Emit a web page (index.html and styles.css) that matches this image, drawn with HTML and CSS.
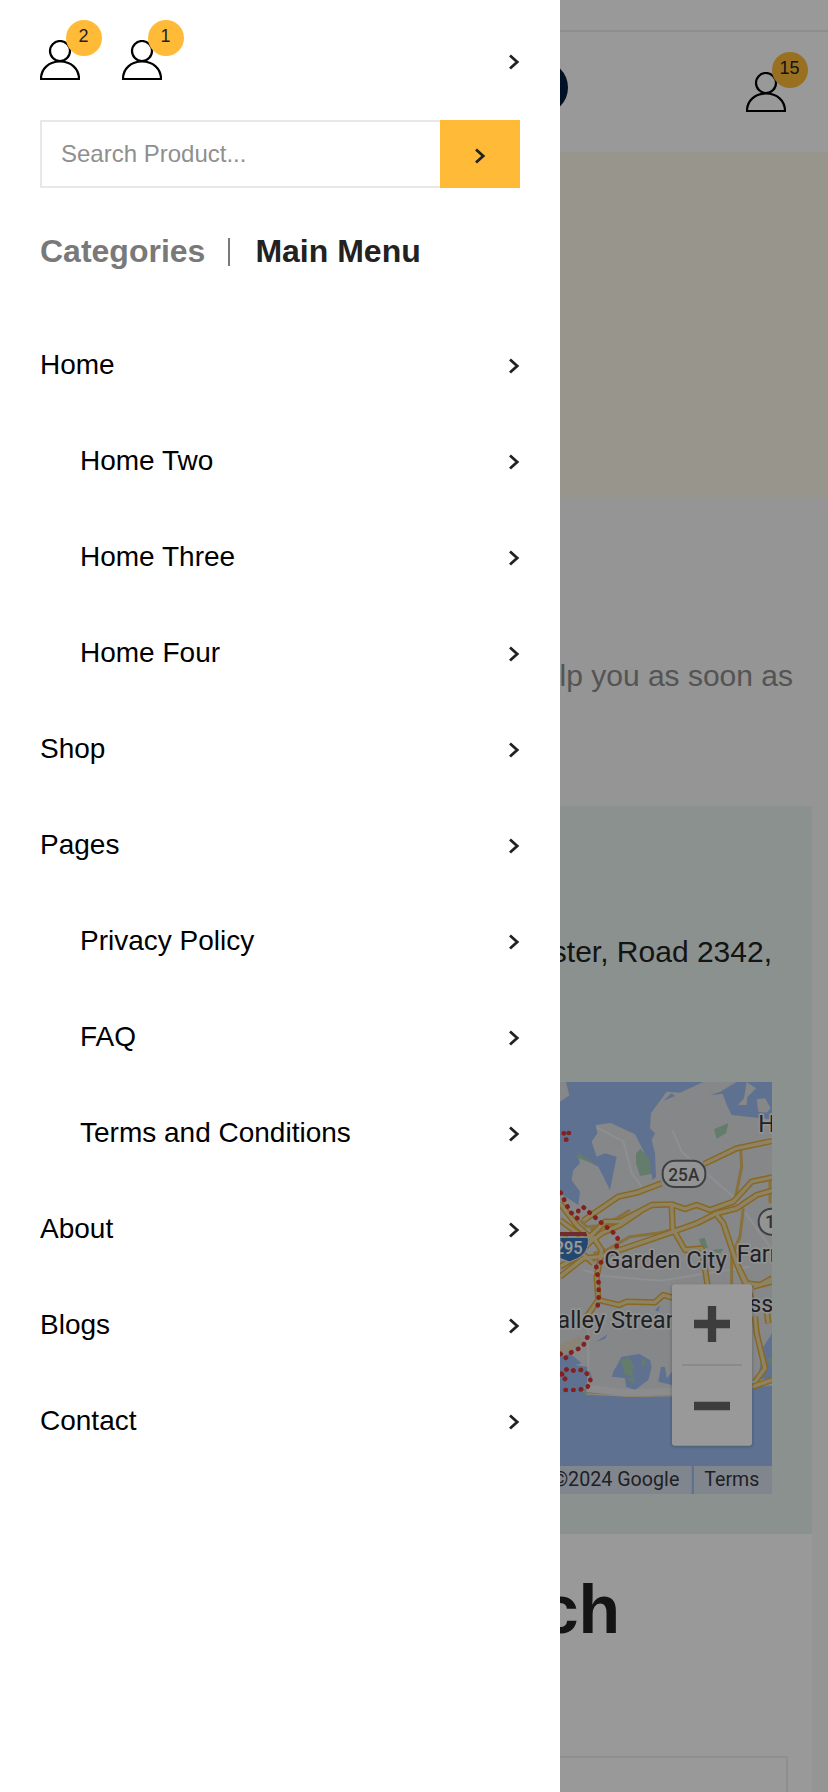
FILE: index.html
```html
<!DOCTYPE html>
<html lang="en">
<head>
<meta charset="utf-8">
<title>Contact</title>
<link rel="stylesheet" href="styles.css">
</head>
<body>
<svg class="defs" aria-hidden="true">
  <symbol id="user" viewBox="0 0 40 40"><circle cx="20" cy="11" r="10"/><path d="M1 39C1 28.500 9 21.500 20 21.500S39 28.500 39 39Z"/></symbol>
  <symbol id="chevron" viewBox="0 0 12 16"><path d="M2 1.500 9.200 8 2 14.500"/></symbol>
</svg>

<div class="page">
  <div class="topbar"></div>
  <header class="header">
    <span class="logo"></span>
    <a class="user"><svg class="user-icon"><use href="#user"/></svg><span class="badge">15</span></a>
  </header>
  <div class="banner"></div>
  <section class="intro"><p>help you as soon as</p></section>
  <main class="cards">
    <section class="address">
      <p>ster, Road 2342,</p>
      <svg class="map" viewBox="30 36 636 1236">
        <g class="terrain">
        <rect class="water" x="30" y="36" width="636" height="1236"/>
        <path class="land" d="M30 36H48L58 76 30 95ZM137 165 182 159 255 193 282 245 300 295 308 330 318 320 315 250 305 210 315 190 300 175 303 130 350 65 390 68 460 36 560 36 515 62 530 105 545 135 666 148V790L640 830 625 920 560 960H240L100 955 125 920 115 890 30 880V370L85 405 90 365 65 330 70 300 90 280 85 260 145 290 180 360 200 260 165 250 140 260 125 215 142 190Z"/>
        <path class="land" d="M590 36 618 55 592 82 590 105 564 105 582 85ZM620 88 645 85 662 115 650 128 625 125Z"/>
        <path class="water" d="M340 92 365 70 375 78ZM480 75 520 62 570 40 540 70ZM190 905 215 860 268 852 300 870 305 890 295 930 255 960 228 950 225 925 186 920ZM325 935 333 890 345 892 350 925 366 905V945ZM30 860 60 850 95 880 30 900ZM137 816 173 793 165 806ZM315 720 330 705 325 725Z"/>
        <path class="park" d="M492 178 535 159 528 190 500 206ZM258 250 272 236 300 270 304 312 270 318 258 280ZM78 262 88 250 142 285ZM447 508 464 503 474 535 455 532ZM480 540 520 536 510 552ZM212 870 235 862 252 885 246 918 225 915ZM276 865 292 880 275 890ZM232 925 255 920 250 945ZM650 870 666 860V885ZM98 955 120 965 115 978 98 970Z"/>
        <path class="sand" d="M30 825 90 795 95 820 45 855 30 850Z"/>
        <path class="beach" d="M110 955 240 970 450 960 666 935"/>
        <path class="shore" d="M110 972 240 979 450 976"/>
        <path class="street" d="M140 172 220 214 245 310 272 345V360M367 180 395 245 550 380 660 530M100 600 160 618 330 632 600 590M115 780V960"/>
        <g>
          <g class="minor"><path d="M572 236 575 290 555 390 490 418M580 415 570 500 545 560V700M130 550 170 540 240 500 320 490 400 470M120 480 200 445 240 420M90 450 110 470 190 465M660 320 660 400"/></g>
          <g class="major"><path d="M100 452 205 380 260 368 335 340M462 282 560 235 666 213"/><path d="M30 450 110 510 165 455 210 455 305 405 365 403 405 417 440 405 480 420 550 395 605 335 666 322"/><path d="M30 400 80 465 130 510 155 490 210 465 270 425M30 620 100 565 150 560 370 485 440 460 500 430 560 415 620 375 666 362"/><path d="M365 403 368 475 405 540 455 535 480 690M500 435 520 460 560 580 590 650 610 700M135 510 155 540 150 570 140 620 145 690 207 705 230 695 315 697 340 675 375 685M145 690 110 740M40 500 130 580M30 590 80 560 135 500M565 590 590 640 630 645 666 625M610 650 666 635M615 740 620 790 645 895 615 935M608 950 666 930M650 720 655 760"/></g>
          <g class="major-fill"><path d="M100 452 205 380 260 368 335 340M462 282 560 235 666 213"/><path d="M30 450 110 510 165 455 210 455 305 405 365 403 405 417 440 405 480 420 550 395 605 335 666 322"/><path d="M30 400 80 465 130 510 155 490 210 465 270 425M30 620 100 565 150 560 370 485 440 460 500 430 560 415 620 375 666 362"/><path d="M365 403 368 475 405 540 455 535 480 690M500 435 520 460 560 580 590 650 610 700M135 510 155 540 150 570 140 620 145 690 207 705 230 695 315 697 340 675 375 685M145 690 110 740M40 500 130 580M30 590 80 560 135 500M565 590 590 640 630 645 666 625M610 650 666 635M615 740 620 790 645 895 615 935M608 950 666 930M650 720 655 760"/></g>
        </g>
        <path class="border" d="M41 190h1M56 189h1M48 209h1M32 368 60 425 82 445 85 422 98 410 150 455 190 488 203 505 200 530 165 570 138 585 146 640V690L140 725M112 802 98 830 64 847 45 866 30 850M30 912 55 895 74 903 98 899 120 920 122 940 108 955 84 960H30M36 912 42 930 55 915"/>
        </g>
        <path class="shield-top" d="M30 486H108L112 498H30Z"/>
        <path class="shield" d="M30 502H114C120 530 105 555 82 566L58 576 30 565Z"/>
        <text class="shield-text" x="14" y="553" textLength="84" lengthAdjust="spacingAndGlyphs">295</text>
        <rect class="route" x="338" y="272" width="128" height="79" rx="36"/>
        <text class="route-text" x="355" y="332" textLength="93" lengthAdjust="spacingAndGlyphs">25A</text>
        <rect class="route" x="626" y="416" width="90" height="78" rx="38"/>
        <text class="route-text" x="645" y="474">1</text>
        <text class="place" x="163" y="594" textLength="367" lengthAdjust="spacingAndGlyphs">Garden City</text>
        <text class="place" x="560" y="577">Farm</text>
        <text class="place" x="625" y="187">H</text>
        <text class="place" x="22" y="775" textLength="387" lengthAdjust="spacingAndGlyphs">alley Stream</text>
        <text class="place" x="598" y="726">ss</text>
        <rect class="zoom-shadow" x="364" y="645" width="244" height="486" rx="9"/>
        <rect class="zoom-box" x="366" y="643" width="240" height="484" rx="8"/>
        <path class="zoom-rule" d="M396 885H576"/>
        <path class="zoom-sign" d="M432 762H540M486 708V816M432 1008H540"/>
        <rect class="credit" x="30" y="1188" width="395" height="84"/>
        <rect class="credit" x="432" y="1188" width="234" height="84"/>
        <text class="credit-text" x="8" y="1248" textLength="380" lengthAdjust="spacingAndGlyphs">©2024 Google</text>
        <text class="credit-text" x="463" y="1248" textLength="165" lengthAdjust="spacingAndGlyphs">Terms</text>
      </svg>
    </section>
    <section class="form">
      <h2>Touch</h2>
      <div class="field"></div>
    </section>
  </main>
</div>

<div class="overlay"></div>

<aside class="drawer">
  <div class="drawer-top">
    <a class="user"><svg class="user-icon"><use href="#user"/></svg><span class="badge">2</span></a>
    <a class="user"><svg class="user-icon"><use href="#user"/></svg><span class="badge">1</span></a>
    <svg class="chevron close"><use href="#chevron"/></svg>
  </div>
  <div class="search">
    <span class="search-text">Search Product...</span>
    <span class="search-button"><svg class="chevron"><use href="#chevron"/></svg></span>
  </div>
  <div class="tabs"><span class="tab">Categories</span><span class="divider"></span><span class="tab active">Main Menu</span></div>
  <nav class="menu">
    <a class="item">Home<svg class="chevron"><use href="#chevron"/></svg></a>
    <a class="item sub">Home Two<svg class="chevron"><use href="#chevron"/></svg></a>
    <a class="item sub">Home Three<svg class="chevron"><use href="#chevron"/></svg></a>
    <a class="item sub">Home Four<svg class="chevron"><use href="#chevron"/></svg></a>
    <a class="item">Shop<svg class="chevron"><use href="#chevron"/></svg></a>
    <a class="item">Pages<svg class="chevron"><use href="#chevron"/></svg></a>
    <a class="item sub">Privacy Policy<svg class="chevron"><use href="#chevron"/></svg></a>
    <a class="item sub">FAQ<svg class="chevron"><use href="#chevron"/></svg></a>
    <a class="item sub">Terms and Conditions<svg class="chevron"><use href="#chevron"/></svg></a>
    <a class="item">About<svg class="chevron"><use href="#chevron"/></svg></a>
    <a class="item">Blogs<svg class="chevron"><use href="#chevron"/></svg></a>
    <a class="item">Contact<svg class="chevron"><use href="#chevron"/></svg></a>
  </nav>
</aside>
</body>
</html>
```
FILE: styles.css
```css
* { box-sizing: border-box; }
html, body { height: 100%; }
body { margin: 0; overflow: hidden; font-family: "Liberation Sans", Arial, sans-serif; color: #222; }
p, h2 { margin: 0; }
.defs { position: absolute; width: 0; height: 0; }

.page { display: flex; flex-direction: column; height: 1792px; overflow: hidden; background: #f8f8f8; }
.topbar { flex: none; height: 32px; background: #fff; border-bottom: 2px solid #ededed; }
.header { flex: none; display: flex; justify-content: space-between; align-items: flex-start; height: 120px; padding: 29px 42px 0 515px; background: #fff; }
.header .user { margin-top: 11px; }
.logo { width: 53px; height: 53px; border-radius: 50%; background: #001c3f; }
.banner { flex: none; height: 345px; background: #fef8eb; }
.intro { flex: none; height: 309px; padding: 159px 35px 0 0; text-align: right; font-size: 30px; line-height: 40px; color: #8c8c8c; }
.cards { flex: 1; display: flex; flex-direction: column; padding: 0 16px; }
.address { flex: none; display: flex; flex-direction: column; align-items: flex-end; justify-content: space-between; height: 728px; padding: 126px 40px 40px; background: #e7f2ed; font-size: 30px; line-height: 40px; }
.form { flex: 1; display: flex; flex-direction: column; justify-content: space-between; padding: 35px 24px 0; background: #fff; }
.form h2 { width: 580px; text-align: right; font-size: 68px; line-height: 80px; }
.field { height: 36px; border: 2px solid #efefef; border-bottom: 0; }

.user { position: relative; width: 40px; height: 40px; }
.user-icon { display: block; width: 40px; height: 40px; fill: none; stroke: #000; stroke-width: 2.2; }
.badge { position: absolute; left: 26px; top: -20px; width: 36px; height: 36px; padding-right: 1px; border-radius: 50%; background: #ffbb38; font-size: 18px; line-height: 32px; text-align: center; color: #222; }
.chevron { flex: none; width: 12px; height: 16px; fill: none; stroke: #222; stroke-width: 2.8; }

.overlay { position: fixed; inset: 0; background: rgba(0, 0, 0, .4); }
.drawer { position: fixed; left: 0; top: 0; bottom: 0; display: flex; flex-direction: column; width: 560px; padding: 40px 40px 0; background: #fff; }
.drawer-top { display: flex; gap: 42px; height: 80px; }
.close { margin: 14px 0 0 auto; }
.search { display: flex; height: 68px; border: 2px solid #e8e8e8; border-right: 0; }
.search-text { flex: 1; padding-left: 19px; font-size: 24px; line-height: 64px; color: #8f8f8f; }
.search-button { display: flex; align-items: center; justify-content: center; width: 80px; margin: -2px 0; padding-top: 4px; background: #ffbb38; }
.tabs { display: flex; align-items: center; height: 36px; margin-top: 46px; font-size: 32px; font-weight: bold; line-height: 36px; }
.tab { padding-bottom: 2px; color: #797979; }
.tab.active { color: #222; }
.divider { width: 2px; height: 28px; margin: 0 25px 0 23px; background: #797979; }
.menu { display: flex; flex-direction: column; margin-top: 47px; }
.item { display: flex; align-items: center; justify-content: space-between; height: 96px; font-size: 28px; color: #000; }
.item .chevron { margin-top: 2px; }
.sub { padding-left: 40px; }

.map { width: 212px; height: 412px; font-family: Roboto, sans-serif; font-weight: 500; }
.terrain { filter: blur(1.8px); }
.map path { fill: none; stroke-linejoin: round; }
.map .water { fill: #9dbdf2; }
.map .land { fill: #dfe1e4; }
.map .park { fill: #a5cfb2; }
.map .sand { fill: #e5dcc4; }
.beach { stroke: #e9eaed; stroke-width: 22; }
.shore { stroke: #f0dfb6; stroke-width: 4; }
.street { stroke: #eceef1; stroke-width: 6; }
.minor { stroke: #e3bd66; stroke-width: 9; fill: none; }
.major { stroke: #e5ad3a; stroke-width: 19; }
.major-fill { stroke: #ecdcaa; stroke-width: 10; }
.border { stroke: #d93832; stroke-width: 14; stroke-dasharray: 1 22; stroke-linecap: round; }
.map .shield-top { fill: #bc4b4b; }
.map .shield { fill: #3977bd; stroke: #eee; stroke-width: 3; }
.shield-text { font-size: 54px; fill: #fff; }
.route { fill: #f4f5f6; stroke: #666a70; stroke-width: 6; }
.route-text { font-size: 54px; fill: #555; }
.place { font-size: 70px; font-weight: 400; fill: #37383c; stroke: #f2f3f4; stroke-width: 10; paint-order: stroke; stroke-linejoin: round; }
.zoom-shadow { fill: #000; opacity: .2; filter: blur(4px); }
.zoom-box { fill: #fff; }
.zoom-rule { stroke: #e6e6e6; stroke-width: 6; }
.map .zoom-sign { stroke: #666; stroke-width: 25; }
.credit { fill: #d8e0ed; }
.credit-text { font-size: 58px; font-weight: 400; fill: #33363c; }
```
